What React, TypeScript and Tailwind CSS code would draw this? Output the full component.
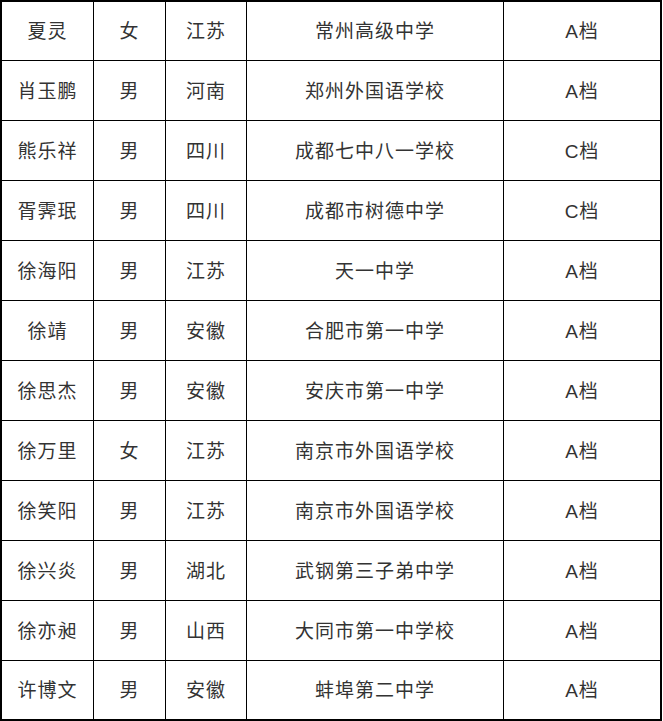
const rows = [
  ['夏灵', '女', '江苏', '常州高级中学', 'A档'],
  ['肖玉鹏', '男', '河南', '郑州外国语学校', 'A档'],
  ['熊乐祥', '男', '四川', '成都七中八一学校', 'C档'],
  ['胥霁珉', '男', '四川', '成都市树德中学', 'C档'],
  ['徐海阳', '男', '江苏', '天一中学', 'A档'],
  ['徐靖', '男', '安徽', '合肥市第一中学', 'A档'],
  ['徐思杰', '男', '安徽', '安庆市第一中学', 'A档'],
  ['徐万里', '女', '江苏', '南京市外国语学校', 'A档'],
  ['徐笑阳', '男', '江苏', '南京市外国语学校', 'A档'],
  ['徐兴炎', '男', '湖北', '武钢第三子弟中学', 'A档'],
  ['徐亦昶', '男', '山西', '大同市第一中学校', 'A档'],
  ['许博文', '男', '安徽', '蚌埠第二中学', 'A档'],
];

export default function App() {
  return (
    <div className="bg-white w-[663px] h-[721px]">
      <div
        className="grid grid-cols-[92px_72px_81px_257px_158px] grid-rows-[59px_repeat(11,60px)] w-[662px] border-l-2 border-t-2 border-black text-[19px] text-[#333333]"
        style={{ fontFamily: '"Liberation Sans", "Noto Sans CJK SC", sans-serif' }}
      >
        {rows.map((row, i) =>
          row.map((cell, j) => (
            <div
              key={`${i}-${j}`}
              className={`flex items-center justify-center border-b border-black tracking-[1px] pt-[3px] ${
                j === 4 ? 'border-r-2' : 'border-r'
              } ${i === rows.length - 1 ? 'border-b-2' : ''}`}
            >
              {cell}
            </div>
          ))
        )}
      </div>
    </div>
  );
}
